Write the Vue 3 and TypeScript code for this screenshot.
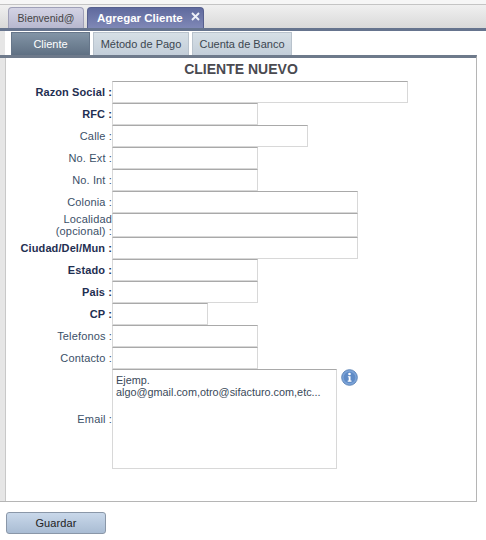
<template>
  <div class="page">
    <div class="main-tabs">
      <div class="main-tab">Bienvenid@</div>
      <div class="main-tab is-active">
        Agregar Cliente
        <svg class="close" width="9" height="9" viewBox="0 0 9 9">
          <path d="M1 1l7 7M8 1l-7 7" fill="none" stroke="#eef0f8" stroke-width="1.9" />
        </svg>
      </div>
    </div>

    <div class="sub-tabs">
      <div
        v-for="tab in subTabs"
        :key="tab"
        class="sub-tab"
        :class="{ 'is-active': tab === 'Cliente' }"
      >
        {{ tab }}
      </div>
    </div>

    <div class="panel">
      <h1 class="title">CLIENTE NUEVO</h1>
      <div class="form">
        <div
          v-for="field in fields"
          :key="field.label"
          class="row"
          :class="{ 'row--tall': field.tall }"
        >
          <label class="label" :class="{ 'is-required': field.required }">
            <template v-if="field.sub">
              {{ field.label }}<br />{{ field.sub }} :
            </template>
            <template v-else>{{ field.label }} :</template>
          </label>
          <input class="input" type="text" :style="{ width: field.width + 'px' }" />
        </div>

        <div class="row row--email">
          <label class="label">Email :</label>
          <div class="textarea">Ejemp.<br />algo@gmail.com,otro@sifacturo.com,etc...</div>
          <svg class="info" width="17" height="17" viewBox="0 0 17 17">
            <circle cx="8.5" cy="8.5" r="7.8" fill="#7ba3d8" stroke="#5f86b8" />
            <circle cx="8.5" cy="8.5" r="5.8" fill="#5f8bc6" />
            <circle cx="8.5" cy="5" r="1.3" fill="#fff" />
            <path d="M6.9 7.2h2.6v4.4h1v1.1H6.7v-1.1h1V8.3h-.8z" fill="#fff" />
          </svg>
        </div>
      </div>
    </div>

    <div class="footer">
      <button type="button" class="save">Guardar</button>
    </div>
  </div>
</template>

<script setup lang="ts">
interface Field {
  label: string
  sub?: string
  width: number
  required?: boolean
  tall?: boolean
}

const subTabs = ['Cliente', 'Método de Pago', 'Cuenta de Banco']

const fields: Field[] = [
  { label: 'Razon Social', width: 296, required: true },
  { label: 'RFC', width: 146, required: true },
  { label: 'Calle', width: 196 },
  { label: 'No. Ext', width: 146 },
  { label: 'No. Int', width: 146 },
  { label: 'Colonia', width: 246 },
  { label: 'Localidad', sub: '(opcional)', width: 246, tall: true },
  { label: 'Ciudad/Del/Mun', width: 246, required: true },
  { label: 'Estado', width: 146, required: true },
  { label: 'Pais', width: 146, required: true },
  { label: 'CP', width: 96, required: true },
  { label: 'Telefonos', width: 146 },
  { label: 'Contacto', width: 146 }
]
</script>

<style>
html,
body {
  margin: 0;
  background: #fff;
}
</style>

<style scoped>
.page {
  width: 486px;
  height: 540px;
  overflow: hidden;
  font-family: "Liberation Sans", Arial, sans-serif;
  font-size: 11px;
  color: #2d3f55;
  background: #fff;
}

.main-tabs {
  display: flex;
  gap: 3px;
  height: 28px;
  padding: 7px 0 0 8px;
  box-sizing: border-box;
  background: linear-gradient(#f6f6f6 4px, #c4c4c4 4px, #c4c4c4 5px, #f0f0f0 5px, #d9d9d9 100%);
}

.main-tab {
  display: flex;
  align-items: center;
  justify-content: center;
  width: 76px;
  box-sizing: border-box;
  border: 1px solid #9fa0b8;
  border-bottom: 0;
  border-radius: 4px 4px 0 0;
  background: linear-gradient(#d3d3e4, #b7b8cf);
  color: #444;
  font-size: 10.5px;
}

.main-tab.is-active {
  position: relative;
  width: 117px;
  justify-content: flex-start;
  padding-left: 9px;
  background: linear-gradient(#5f6a9e, #7f88b6);
  border-color: #565f8e;
  color: #fff;
  font-size: 11.5px;
  font-weight: bold;
}

.close {
  position: absolute;
  right: 3px;
  top: 4px;
}

.sub-tabs {
  display: flex;
  gap: 3px;
  height: 27px;
  padding: 1px 0 0 11px;
  box-sizing: border-box;
  border-top: 3px solid #66748e;
  background: linear-gradient(to right, #e6e6e6 5px, #fff 5px);
}

.sub-tab {
  display: flex;
  align-items: center;
  justify-content: center;
  width: 100px;
  box-sizing: border-box;
  background: linear-gradient(#d6dfe6, #c3ced9);
  border: 1px solid #b8c2cc;
  border-bottom: 0;
  color: #3c4650;
}

.sub-tab.is-active {
  width: 79px;
  background: linear-gradient(#8294a6, #5f7083);
  border-color: #66768a;
  color: #fff;
}

.sub-tab:nth-child(2) {
  width: 96px;
}

.panel {
  width: 477px;
  height: 447px;
  box-sizing: border-box;
  padding-left: 6px;
  background: linear-gradient(to right, #e6e6e6 5px, #c8c8c8 5px, #c8c8c8 6px, #fff 6px);
  border-top: 3px solid #6e7a8b;
  border-right: 1px solid #b5b5b5;
  border-bottom: 1px solid #b5b5b5;
}

.title {
  margin: 0;
  height: 23px;
  line-height: 23px;
  text-align: center;
  font-size: 14px;
  font-weight: bold;
  color: #4a4a50;
}

.form {
  display: flex;
  flex-direction: column;
}

.row {
  display: flex;
  align-items: center;
  height: 22px;
}

.row--tall {
  height: 24px;
}

.row--email {
  height: 100px;
}

.label {
  width: 106px;
  flex-shrink: 0;
  text-align: right;
  color: #3b5068;
  line-height: 12px;
  font-size: 11px;
  letter-spacing: 0.15px;
}

.label.is-required {
  font-weight: bold;
  color: #1f2f52;
  letter-spacing: 0.1px;
}

.input {
  display: block;
  height: 22px;
  box-sizing: border-box;
  margin: 0;
  padding: 0 3px;
  background: #fff;
  border: 1px solid #d8d8d8;
  border-top: 1px solid #a9a9a9;
  border-radius: 0;
  outline: none;
}

.row--tall .input {
  height: 24px;
}

.textarea {
  width: 225px;
  height: 100px;
  box-sizing: border-box;
  padding: 4px 3px;
  background: #fff;
  border: 1px solid #d8d8d8;
  border-top: 1px solid #a9a9a9;
  font-size: 10.85px;
  line-height: 12px;
  color: #3a4a5a;
  white-space: nowrap;
}

.info {
  align-self: flex-start;
  margin-left: 4px;
}

.footer {
  height: 38px;
  padding: 10px 0 0 6px;
  box-sizing: border-box;
}

.save {
  display: block;
  width: 100px;
  height: 22px;
  padding: 0;
  border: 1px solid #8a97a8;
  border-radius: 3px;
  background: linear-gradient(#c9d8ea, #a9bcd3);
  color: #222;
  font-family: inherit;
  font-size: 11px;
  letter-spacing: 0.1px;
}
</style>
